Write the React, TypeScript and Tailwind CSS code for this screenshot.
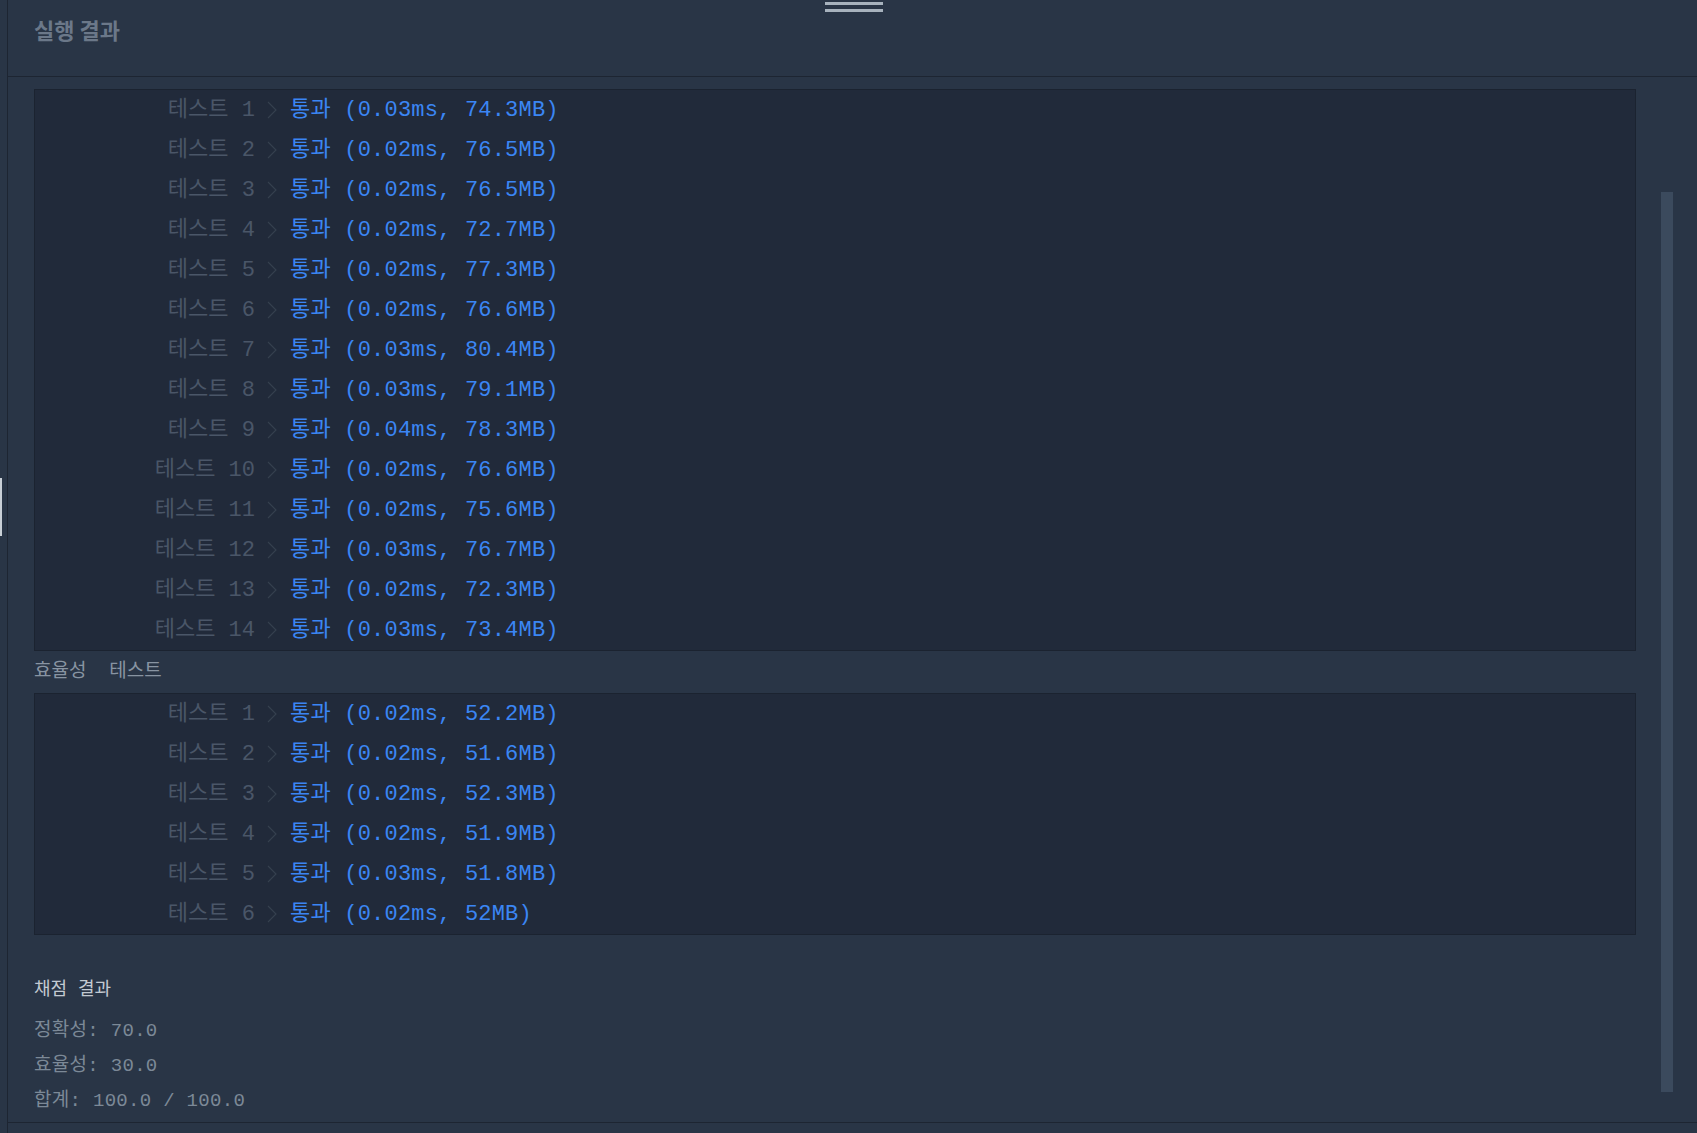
const accuracy = [
  ["1", "0.03ms, 74.3MB"],
  ["2", "0.02ms, 76.5MB"],
  ["3", "0.02ms, 76.5MB"],
  ["4", "0.02ms, 72.7MB"],
  ["5", "0.02ms, 77.3MB"],
  ["6", "0.02ms, 76.6MB"],
  ["7", "0.03ms, 80.4MB"],
  ["8", "0.03ms, 79.1MB"],
  ["9", "0.04ms, 78.3MB"],
  ["10", "0.02ms, 76.6MB"],
  ["11", "0.02ms, 75.6MB"],
  ["12", "0.03ms, 76.7MB"],
  ["13", "0.02ms, 72.3MB"],
  ["14", "0.03ms, 73.4MB"],
];

const efficiency = [
  ["1", "0.02ms, 52.2MB"],
  ["2", "0.02ms, 51.6MB"],
  ["3", "0.02ms, 52.3MB"],
  ["4", "0.02ms, 51.9MB"],
  ["5", "0.03ms, 51.8MB"],
  ["6", "0.02ms, 52MB"],
];

const mono = "font-['Liberation_Mono','Noto_Sans_CJK_KR',monospace]";

function Chevron() {
  return (
    <svg width="10" height="18" viewBox="0 0 10 18" className="ml-[12px] shrink-0">
      <polyline points="1,1 9,9 1,17" fill="none" stroke="#36414f" strokeWidth="1.1" />
    </svg>
  );
}

function ResultTable({ rows }: { rows: string[][] }) {
  return (
    <div className="border border-[#1b2330] bg-[#212a3a]">
      {rows.map(([n, r]) => (
        <div key={n} className={`flex h-10 items-center text-[22px] ${mono}`}>
          <span className="w-[220px] shrink-0 whitespace-pre text-right text-[#4a5668]">
            테스트 {n}
          </span>
          <Chevron />
          <span className="ml-[13px] whitespace-pre tracking-[0.2px] text-[#3b86f4]">
            통과 ({r})
          </span>
        </div>
      ))}
    </div>
  );
}

export default function App() {
  return (
    <div className="relative h-[1133px] w-full overflow-hidden bg-[#293546]">
      <div className="absolute left-[825px] top-[2px] flex w-[58px] flex-col gap-[4px]">
        <div className="h-[3px] bg-[#a7b2bd]" />
        <div className="h-[3px] bg-[#a7b2bd]" />
      </div>
      <div className="absolute left-0 top-[478px] h-[58px] w-[2px] bg-[#c8cfd6]" />
      <div className="absolute left-[1661px] top-[192px] h-[900px] w-[12px] bg-[#3b4a5d]" />

      <div className="flex h-full">
        <div className="w-[8px] shrink-0 border-r border-[#1d2532]" />
        <div className="flex flex-1 flex-col">
          <div className="h-[77px] shrink-0 border-b border-[#1d2532] pl-[26px] pt-[13px]">
            <h2 className="font-['Noto_Sans_CJK_KR',sans-serif] text-[22px] font-bold leading-8 text-[#6b7889]">
              실행 결과
            </h2>
          </div>

          <div className="h-[1046px] shrink-0 border-b border-[#1d2532] pl-[26px] pr-[61px] pt-[12px]">
            <ResultTable rows={accuracy} />
            <div className={`h-[42px] whitespace-pre text-[19px] leading-[42px] text-[#8894a2] ${mono}`}>
              효율성  테스트
            </div>
            <ResultTable rows={efficiency} />

            <div className={`mt-[37px] ${mono}`}>
              <h3 className="h-9 text-[18px] leading-9 text-[#c3cad2]">채점 결과</h3>
              <div className="mt-[6px] text-[19px] tracking-[0.3px] text-[#7c8997]">
                <p className="h-[35px] leading-[35px]">정확성: 70.0</p>
                <p className="h-[35px] leading-[35px]">효율성: 30.0</p>
                <p className="h-[35px] leading-[35px]">합계: 100.0 / 100.0</p>
              </div>
            </div>
          </div>
        </div>
      </div>
    </div>
  );
}
